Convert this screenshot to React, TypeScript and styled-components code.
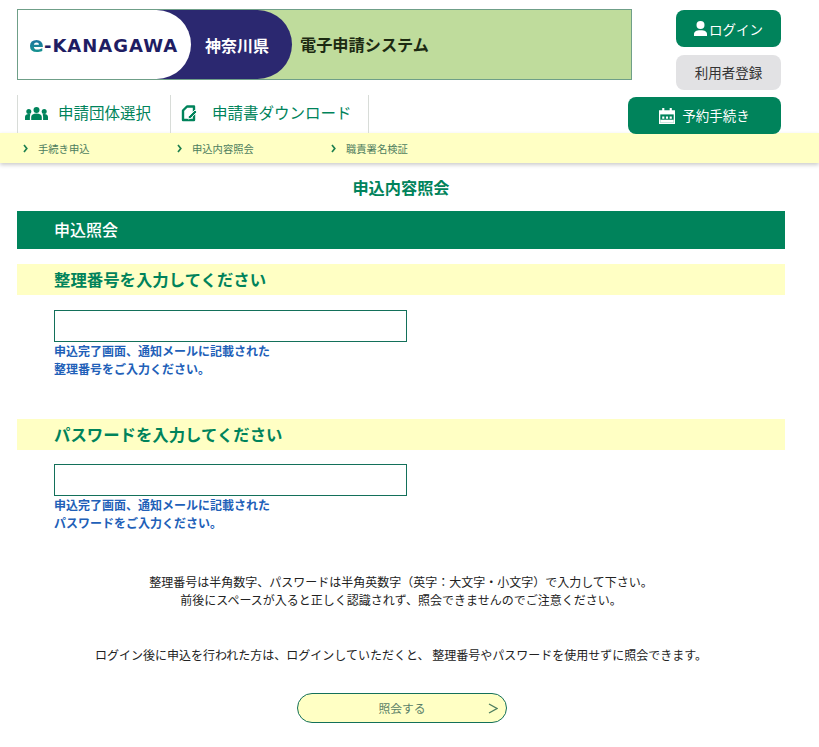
import React from 'react'
import styled, { createGlobalStyle } from 'styled-components'

const GREEN = '#00835b'
const PALE = '#ffffc4'
const JP = `"Noto Sans CJK JP", "Noto Sans", sans-serif`

const GlobalStyle = createGlobalStyle`
  html, body {
    margin: 0;
    padding: 0;
    background: #fff;
    font-family: ${JP};
  }
  * {
    box-sizing: border-box;
  }
`

const Page = styled.div`
  width: 819px;
  height: 747px;
  overflow: hidden;
`

const Header = styled.header`
  display: flex;
  justify-content: space-between;
  padding: 9px 38px 0 17px;
  height: 133px;
`

const HeaderLeft = styled.div`
  display: flex;
  flex-direction: column;
`

const Banner = styled.div`
  display: flex;
  align-items: center;
  flex: none;
  width: 615px;
  height: 71px;
  background: #bfdc9c;
  border: 1px solid #6f9f88;
`

const LogoPlate = styled.div`
  position: relative;
  z-index: 2;
  display: flex;
  align-items: center;
  flex: none;
  width: 173px;
  height: 69px;
  padding-left: 11px;
  background: #fff;
  border-radius: 0 35px 35px 0;
`

const LogoMark = styled.span`
  font-family: "DejaVu Sans", sans-serif;
  font-size: 18px;
  font-weight: 700;
  letter-spacing: 1px;
  color: #1f1d63;
  white-space: nowrap;
`

const LogoE = styled.span`
  font-size: 22px;
  letter-spacing: 0;
  background: linear-gradient(180deg, #1f5fa8, #14a08a);
  -webkit-background-clip: text;
  background-clip: text;
  color: transparent;
`

const PrefPlate = styled.div`
  display: flex;
  align-items: center;
  flex: none;
  width: 136px;
  height: 69px;
  margin-left: -35px;
  padding-left: 49px;
  background: #2b2870;
  border-radius: 0 35px 35px 0;
  color: #fff;
  font-size: 16px;
  font-weight: 700;
  white-space: nowrap;
`

const SystemName = styled.div`
  margin-left: 8px;
  margin-top: -1px;
  font-size: 16.2px;
  font-weight: 700;
  color: #1c2a12;
`

const Nav = styled.nav`
  display: flex;
  flex: none;
  margin-top: 15px;
  height: 38px;
`

const NavItem = styled.a<{ $width: number }>`
  display: flex;
  align-items: center;
  gap: 10px;
  width: ${({ $width }) => $width}px;
  padding-left: 7px;
  padding-bottom: 5px;
  border-left: 1px solid #d8dcd8;
  color: ${GREEN};
  font-size: 15.5px;
  white-space: nowrap;
  svg {
    margin-top: 3px;
  }
  &:last-child {
    border-right: 1px solid #d8dcd8;
    padding-left: 10px;
    gap: 15px;
  }
`

const HeaderRight = styled.div`
  position: relative;
  z-index: 3;
  display: flex;
  flex-direction: column;
  align-items: flex-end;
  margin-left: -4px;
  padding-top: 1px;
`

const LoginButton = styled.a`
  display: flex;
  align-items: center;
  justify-content: center;
  flex: none;
  gap: 2px;
  width: 105px;
  height: 37px;
  background: ${GREEN};
  border-radius: 8px;
  color: #fff;
  font-size: 13.5px;
`

const RegisterButton = styled.a`
  display: flex;
  align-items: center;
  justify-content: center;
  flex: none;
  width: 105px;
  height: 35px;
  margin-top: 8px;
  padding-bottom: 2px;
  background: #e2e2e4;
  border-radius: 8px;
  color: #333;
  font-size: 13.5px;
`

const ReserveButton = styled.a`
  display: flex;
  align-items: center;
  justify-content: center;
  flex: none;
  gap: 7px;
  width: 153px;
  height: 37px;
  margin-top: 7px;
  padding-bottom: 2px;
  background: ${GREEN};
  border-radius: 8px;
  color: #fff;
  font-size: 13.5px;
  svg {
    margin-top: 2px;
  }
`

const SubBar = styled.div`
  display: flex;
  align-items: center;
  height: 30px;
  padding-left: 23px;
  background: ${PALE};
  box-shadow: 0 2px 4px rgba(0, 0, 0, 0.2);
`

const SubLink = styled.a`
  display: flex;
  align-items: center;
  gap: 10px;
  width: 154px;
  color: #4d7d5e;
  font-size: 10.3px;
`

const Main = styled.main`
  width: 785px;
  padding-left: 17px;
`

const PageTitle = styled.h1`
  margin: 14px 0 0;
  height: 34px;
  line-height: 20px;
  text-align: center;
  font-size: 16.2px;
  font-weight: 700;
  color: ${GREEN};
`

const PanelTitle = styled.div`
  height: 38px;
  line-height: 37px;
  padding-left: 37px;
  background: ${GREEN};
  color: #fff;
  font-size: 16px;
  font-weight: 500;
`

const Section = styled.section<{ $height: number; $top?: number }>`
  height: ${({ $height }) => $height}px;
  margin-top: ${({ $top }) => $top ?? 0}px;
`

const SectionTitle = styled.h2`
  margin: 0;
  height: 31px;
  line-height: 31px;
  padding-left: 37px;
  background: ${PALE};
  color: ${GREEN};
  font-size: 16.4px;
  font-weight: 700;
`

const Field = styled.input<{ $top: number }>`
  display: block;
  width: 353px;
  height: 32px;
  margin: ${({ $top }) => $top}px 0 0 37px;
  border: 1px solid #13705a;
  background: #fff;
  outline: none;
`

const Help = styled.p`
  margin: 0 0 0 37px;
  font-size: 12px;
  line-height: 18px;
  font-weight: 700;
  color: #2160b8;
`

const Notes = styled.p`
  margin: 0;
  text-align: center;
  font-size: 12px;
  line-height: 18px;
  color: #222;
`

const LoginNote = styled(Notes)`
  margin-top: 37px;
`

const SubmitRow = styled.div`
  display: flex;
  justify-content: center;
  margin-top: 29px;
  padding-left: 2px;
`

const SubmitButton = styled.button`
  position: relative;
  width: 210px;
  height: 30px;
  padding: 0 0 2px;
  background: ${PALE};
  border: 1px solid #13705a;
  border-radius: 15px;
  color: #5b7f68;
  font-family: ${JP};
  font-size: 11.8px;
`

const SubmitArrow = styled.svg`
  position: absolute;
  right: 8px;
  top: 9px;
`

const UsersIcon = () => (
  <svg width="23" height="13" viewBox="0 0 23 13" fill={GREEN}>
    <circle cx="11.500" cy="3" r="3" />
    <circle cx="3.800" cy="4.400" r="2.500" />
    <circle cx="19.200" cy="4.400" r="2.500" />
    <path d="M6.200 13v-3c0-2 2-3.500 5.300-3.500s5.300 1.500 5.300 3.500v3z" />
    <path d="M0 13v-3c0-1.800 1.500-3 3.800-3 .7 0 1.100.1 1.600.4-.4.700-.5 1.500-.5 2.600v3z" />
    <path d="M23 13v-3c0-1.800-1.500-3-3.800-3-.7 0-1.100.1-1.600.4.400.7.5 1.500.5 2.600v3z" />
  </svg>
)

const DocIcon = () => (
  <svg width="16" height="17" viewBox="0 0 16 17" fill="none">
    <path d="M6 1.500h7v13.500h-11v-9.500z" stroke={GREEN} strokeWidth="2.400" strokeLinejoin="round" />
    <path d="M7.500 11.500l6.500-6.500 2 2-6.200 6.300-2.800.7z" fill={GREEN} stroke="#fff" strokeWidth="0.900" />
  </svg>
)

const UserIcon = () => (
  <svg width="13" height="15" viewBox="0 0 13 15" fill="#fff">
    <circle cx="6.500" cy="4" r="4" />
    <path d="M0 15v-2c0-2.200 2-3.800 6.500-3.800s6.500 1.600 6.500 3.800v2z" />
  </svg>
)

const CalendarIcon = () => (
  <svg width="16" height="16" viewBox="0 0 15 15" fill="#fff">
    <path d="M3 0h2v2h5V0h2v2h3v13H0V2h3z" />
    <path d="M1.200 6h12.600v7.800H1.200z" fill={GREEN} />
    <path d="M3 8h2v2H3zM6.500 8h2v2h-2zM10 8h2v2h-2z" />
    <path d="M1.200 11h12.600v2.800H1.200z" />
  </svg>
)

const Chevron = () => (
  <svg width="5" height="9" viewBox="0 0 5 9" fill="none">
    <path d="M1 1l2.800 3.500L1 8" stroke="#1d7f4f" strokeWidth="1.700" />
  </svg>
)

export default function App() {
  return (
    <Page>
      <GlobalStyle />
      <Header>
        <HeaderLeft>
          <Banner>
            <LogoPlate>
              <LogoMark>
                <LogoE>e</LogoE>-KANAGAWA
              </LogoMark>
            </LogoPlate>
            <PrefPlate>神奈川県</PrefPlate>
            <SystemName>電子申請システム</SystemName>
          </Banner>
          <Nav>
            <NavItem $width={153}>
              <UsersIcon />
              申請団体選択
            </NavItem>
            <NavItem $width={199}>
              <DocIcon />
              申請書ダウンロード
            </NavItem>
          </Nav>
        </HeaderLeft>
        <HeaderRight>
          <LoginButton>
            <UserIcon />
            ログイン
          </LoginButton>
          <RegisterButton>利用者登録</RegisterButton>
          <ReserveButton>
            <CalendarIcon />
            予約手続き
          </ReserveButton>
        </HeaderRight>
      </Header>
      <SubBar>
        <SubLink>
          <Chevron />
          手続き申込
        </SubLink>
        <SubLink>
          <Chevron />
          申込内容照会
        </SubLink>
        <SubLink>
          <Chevron />
          職責署名検証
        </SubLink>
      </SubBar>
      <Main>
        <PageTitle>申込内容照会</PageTitle>
        <PanelTitle>申込照会</PanelTitle>
        <Section $height={155} $top={15}>
          <SectionTitle>整理番号を入力してください</SectionTitle>
          <Field type="text" $top={15} />
          <Help>
            申込完了画面、通知メールに記載された
            <br />
            整理番号をご入力ください。
          </Help>
        </Section>
        <Section $height={154}>
          <SectionTitle>パスワードを入力してください</SectionTitle>
          <Field type="password" $top={14} />
          <Help>
            申込完了画面、通知メールに記載された
            <br />
            パスワードをご入力ください。
          </Help>
        </Section>
        <Notes>
          整理番号は半角数字、パスワードは半角英数字（英字：大文字・小文字）で入力して下さい。
          <br />
          前後にスペースが入ると正しく認識されず、照会できませんのでご注意ください。
        </Notes>
        <LoginNote>
          ログイン後に申込を行われた方は、ログインしていただくと、 整理番号やパスワードを使用せずに照会できます。
        </LoginNote>
        <SubmitRow>
          <SubmitButton>
            照会する
            <SubmitArrow width="10" height="11" viewBox="0 0 10 11" fill="none">
              <path d="M1 1l8 4.500L1 10" stroke="#4d7d5e" strokeWidth="1.300" />
            </SubmitArrow>
          </SubmitButton>
        </SubmitRow>
      </Main>
    </Page>
  )
}
